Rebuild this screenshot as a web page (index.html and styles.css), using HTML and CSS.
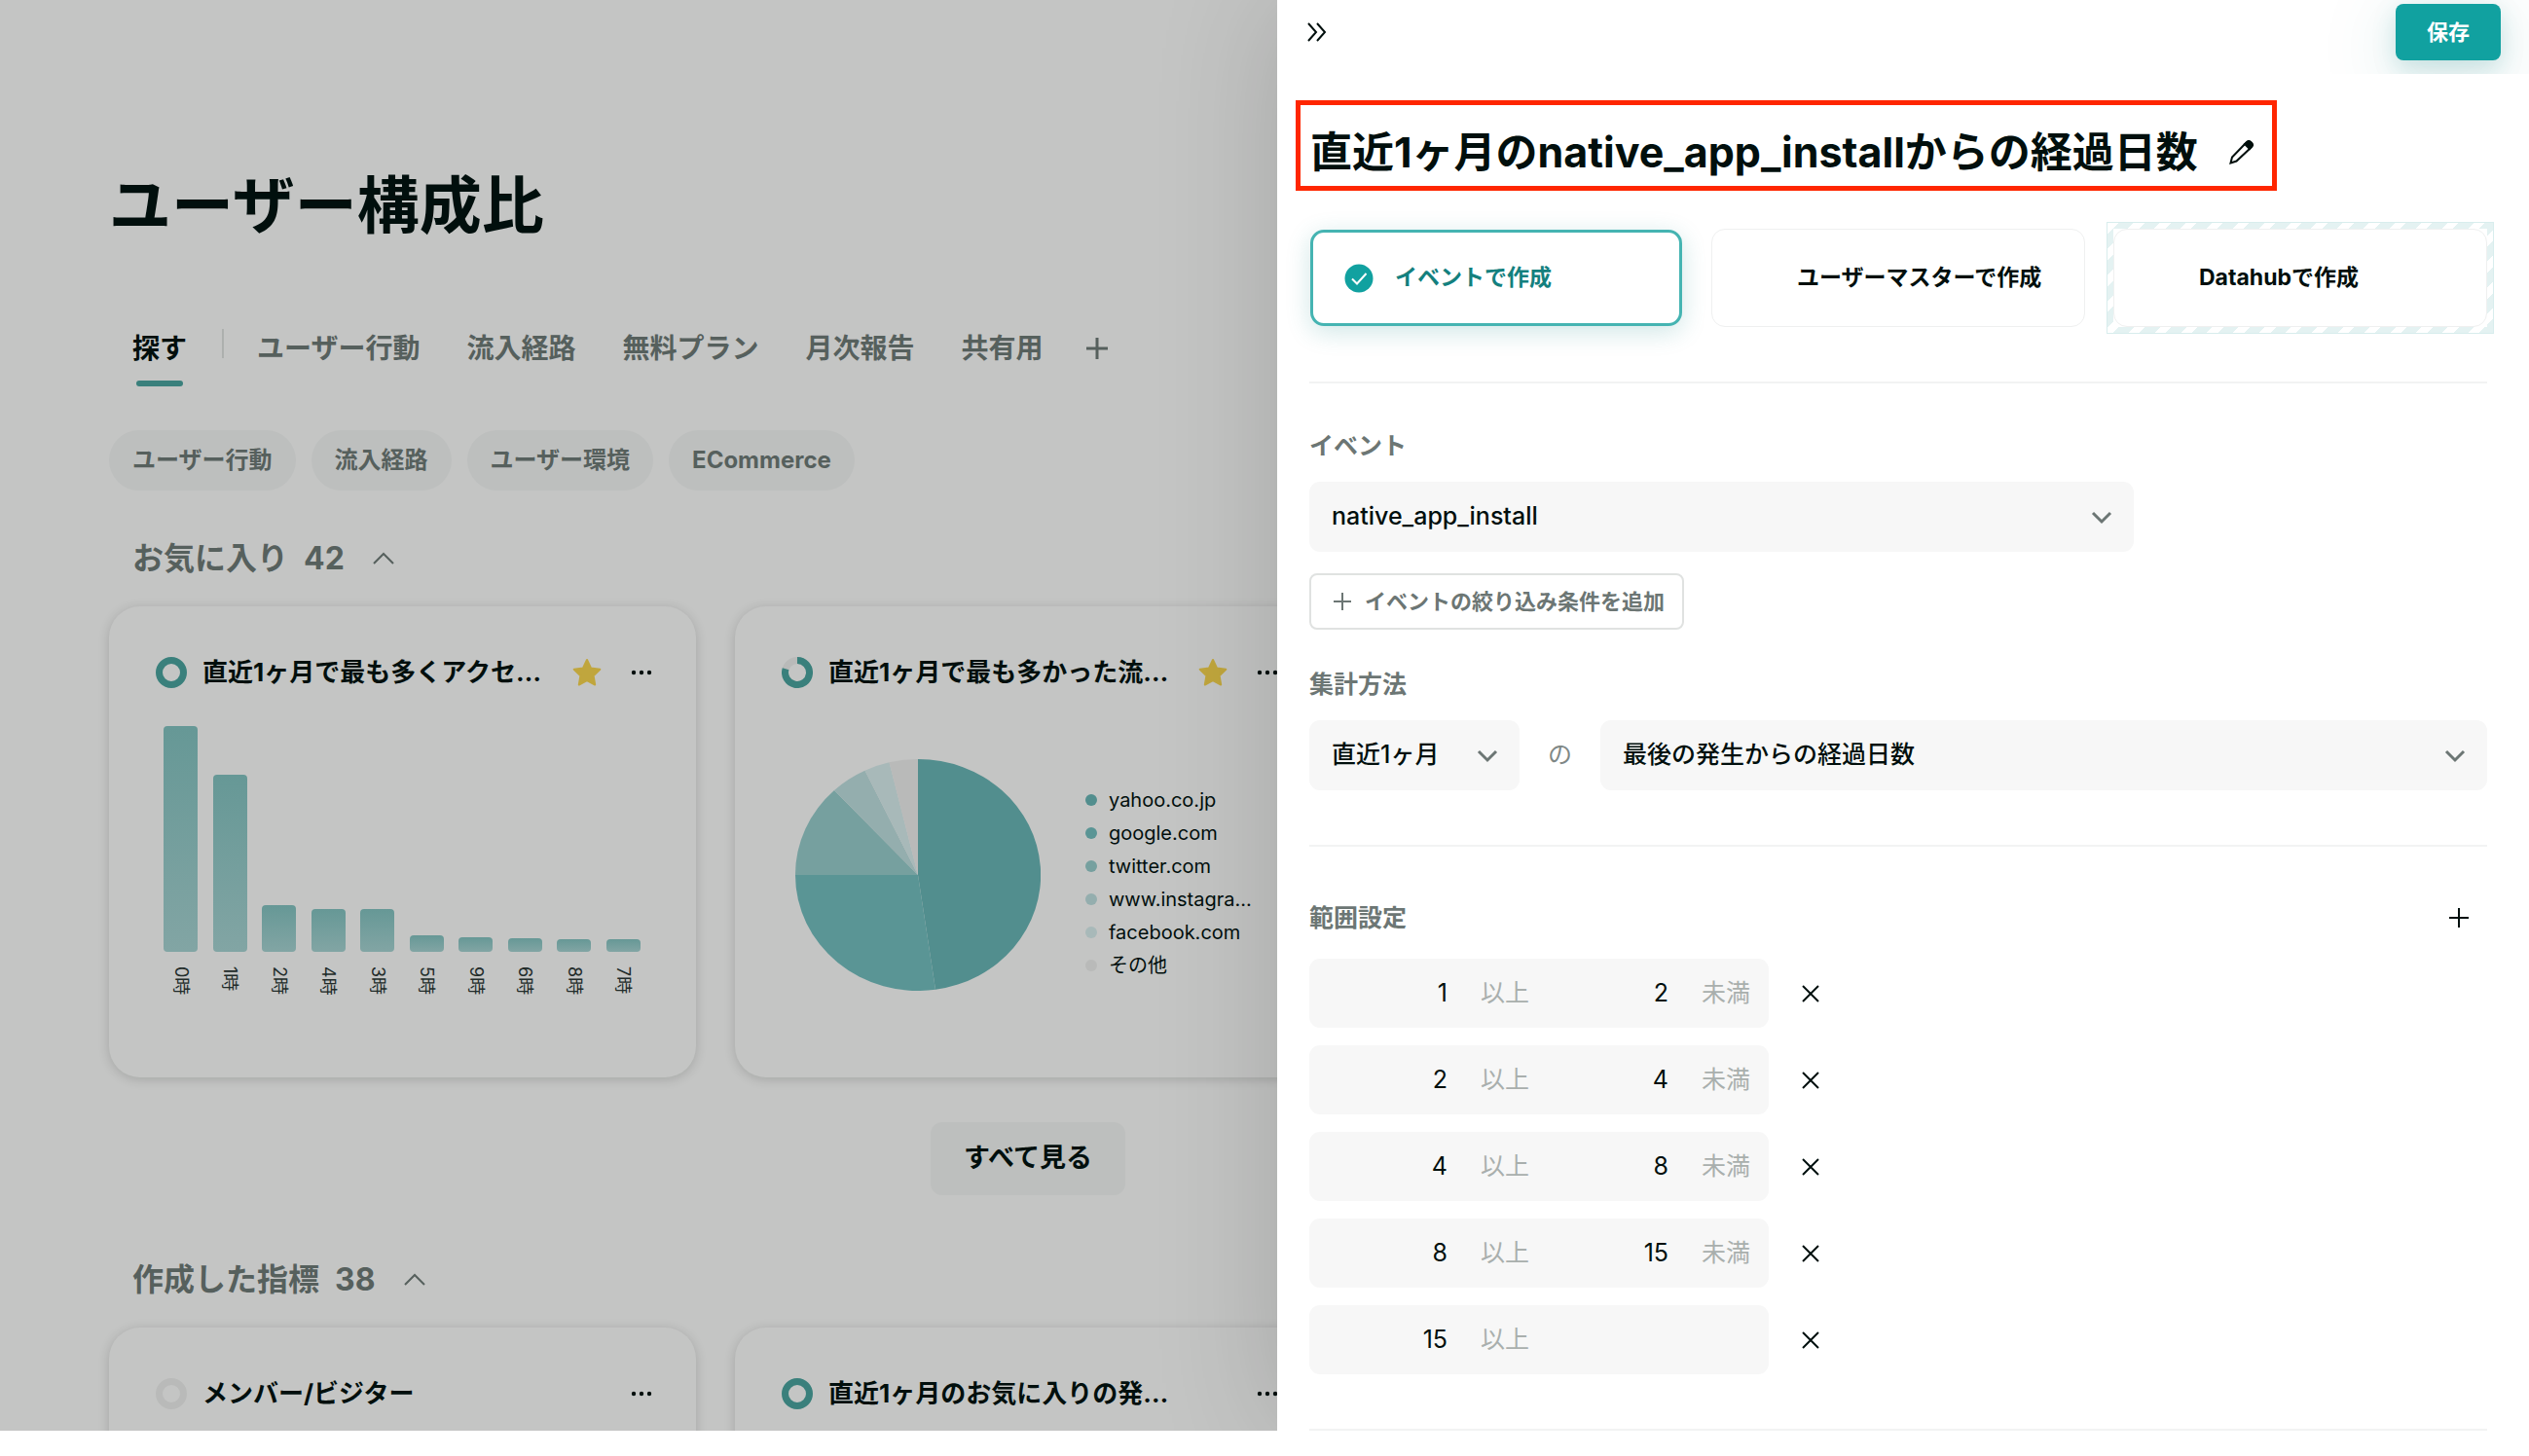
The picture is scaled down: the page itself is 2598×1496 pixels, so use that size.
FILE: index.html
```html
<!DOCTYPE html>
<html lang="ja">
<head>
<meta charset="utf-8">
<title>ユーザー構成比</title>
<link rel="stylesheet" href="styles.css">
</head>
<body>
<div class="app">
  <main class="page">
    <h1 class="page-title">ユーザー構成比</h1>
    <nav class="tabs">
      <a class="tab tab-active" href="#">探す</a>
      <span class="tab-sep"></span>
      <a class="tab" href="#">ユーザー行動</a>
      <a class="tab" href="#">流入経路</a>
      <a class="tab" href="#">無料プラン</a>
      <a class="tab" href="#">月次報告</a>
      <a class="tab" href="#">共有用</a>
      <button class="icon-btn" aria-label="タブを追加"><svg width="24" height="24" viewBox="0 0 24 24"><path d="M12 1v22M1 12h22"/></svg></button>
    </nav>
    <div class="chips">
      <button class="chip">ユーザー行動</button>
      <button class="chip">流入経路</button>
      <button class="chip">ユーザー環境</button>
      <button class="chip">ECommerce</button>
    </div>

    <h2 class="section-title">お気に入り <span>42</span>
      <svg class="caret" width="22" height="14" viewBox="0 0 22 14"><path d="M1 12L11 2l10 10"/></svg></h2>
    <div class="cards">
      <article class="card">
        <header class="card-head">
          <svg class="ring" width="32" height="32" viewBox="0 0 32 32"><circle cx="16" cy="16" r="12.5"/></svg>
          <h3>直近1ヶ月で最も多くアクセ…</h3>
          <svg class="star" width="32" height="32" viewBox="0 0 32 32"><path d="M16 3l4 8.500 9.300 1.300-6.700 6.500 1.600 9.200-8.200-4.400-8.200 4.400 1.600-9.200-6.700-6.500 9.300-1.300z"/></svg>
          <svg class="dots" width="22" height="6" viewBox="0 0 22 6"><circle cx="3" cy="3" r="2.200"/><circle cx="11" cy="3" r="2.200"/><circle cx="19" cy="3" r="2.200"/></svg>
        </header>
        <div class="bars">
          <div class="bar-col"><i style="height:232px"></i><span>0時</span></div>
          <div class="bar-col"><i style="height:182px"></i><span>1時</span></div>
          <div class="bar-col"><i style="height:48px"></i><span>2時</span></div>
          <div class="bar-col"><i style="height:44px"></i><span>4時</span></div>
          <div class="bar-col"><i style="height:44px"></i><span>3時</span></div>
          <div class="bar-col"><i style="height:17px"></i><span>5時</span></div>
          <div class="bar-col"><i style="height:15px"></i><span>9時</span></div>
          <div class="bar-col"><i style="height:14px"></i><span>6時</span></div>
          <div class="bar-col"><i style="height:13px"></i><span>8時</span></div>
          <div class="bar-col"><i style="height:13px"></i><span>7時</span></div>
        </div>
      </article>
      <article class="card">
        <header class="card-head">
          <svg class="ring" width="32" height="32" viewBox="0 0 32 32"><circle class="ring-off" cx="16" cy="16" r="12.500"/><path d="M16 3.500A12.500 12.500 0 1 1 4.100 12.200"/></svg>
          <h3>直近1ヶ月で最も多かった流…</h3>
          <svg class="star" width="32" height="32" viewBox="0 0 32 32"><path d="M16 3l4 8.500 9.300 1.300-6.700 6.500 1.600 9.200-8.200-4.400-8.200 4.400 1.600-9.200-6.700-6.500 9.300-1.300z"/></svg>
          <svg class="dots" width="22" height="6" viewBox="0 0 22 6"><circle cx="3" cy="3" r="2.200"/><circle cx="11" cy="3" r="2.200"/><circle cx="19" cy="3" r="2.200"/></svg>
        </header>
        <div class="pie-row">
          <svg class="pie" width="252" height="238" viewBox="-126 -119 252 238">
            <path fill="#528e8e" d="M0 0V-119A126 119 0 0 1 18 117.800z"/>
            <path fill="#5a9595" d="M0 0L18 117.800A126 119 0 0 1-126 0z"/>
            <path fill="#76a09f" d="M0 0H-126A126 119 0 0 1-86 -87z"/>
            <path fill="#94aeae" d="M0 0L-86 -87A126 119 0 0 1-54.500 -107.300z"/>
            <path fill="#a8b9b9" d="M0 0L-54.500 -107.300A126 119 0 0 1-29.500 -115.700z"/>
            <path fill="#b9bab9" d="M0 0L-29.500 -115.700A126 119 0 0 1 0-119z"/>
          </svg>
          <ul class="legend">
            <li><i class="c1"></i>yahoo.co.jp</li>
            <li><i class="c2"></i>google.com</li>
            <li><i class="c3"></i>twitter.com</li>
            <li><i class="c4"></i>www.instagra...</li>
            <li><i class="c5"></i>facebook.com</li>
            <li><i class="c6"></i>その他</li>
          </ul>
        </div>
      </article>
    </div>
    <button class="see-all">すべて見る</button>

    <h2 class="section-title">作成した指標 <span>38</span>
      <svg class="caret" width="22" height="14" viewBox="0 0 22 14"><path d="M1 12L11 2l10 10"/></svg></h2>
    <div class="cards">
      <article class="card">
        <header class="card-head">
          <svg class="ring" width="32" height="32" viewBox="0 0 32 32"><circle class="ring-off" cx="16" cy="16" r="12.500"/></svg>
          <h3>メンバー/ビジター</h3>
          <svg class="dots" width="22" height="6" viewBox="0 0 22 6"><circle cx="3" cy="3" r="2.200"/><circle cx="11" cy="3" r="2.200"/><circle cx="19" cy="3" r="2.200"/></svg>
        </header>
      </article>
      <article class="card">
        <header class="card-head">
          <svg class="ring" width="32" height="32" viewBox="0 0 32 32"><circle cx="16" cy="16" r="12.500"/></svg>
          <h3>直近1ヶ月のお気に入りの発…</h3>
          <svg class="dots" width="22" height="6" viewBox="0 0 22 6"><circle cx="3" cy="3" r="2.200"/><circle cx="11" cy="3" r="2.200"/><circle cx="19" cy="3" r="2.200"/></svg>
        </header>
      </article>
    </div>
  </main>

  <aside class="drawer">
    <div class="drawer-head">
      <button class="icon-btn dark" aria-label="閉じる"><svg width="22" height="22" viewBox="0 0 22 22"><path d="M2 2l8 9-8 9M11 2l8 9-8 9"/></svg></button>
      <button class="save">保存</button>
    </div>
    <div class="drawer-body">
      <div class="name-box">
        <h2>直近1ヶ月のnative_app_installからの経過日数</h2>
        <button class="icon-btn dark" aria-label="名前を編集"><svg class="pencil" width="30" height="30" viewBox="0 0 30 30"><path d="M3.500 26.500l1.500-6L20 5q2.200-2 4.300 0l.7.800q2 2 0 4.200L9.500 24.500z"/><path d="M18 7l5 5 3-4-4-4z" class="tip"/></svg></button>
      </div>
      <div class="kinds">
        <label class="kind"><input type="radio" name="kind" checked><svg class="check" width="30" height="30" viewBox="0 0 30 30"><circle cx="15" cy="15" r="14.500"/><path d="M8 15.500l5 5L22.500 10"/></svg><span>イベントで作成</span></label>
        <label class="kind"><input type="radio" name="kind"><svg class="check" width="30" height="30" viewBox="0 0 30 30"><circle cx="15" cy="15" r="14.500"/></svg><span>ユーザーマスターで作成</span></label>
        <label class="kind striped"><input type="radio" name="kind"><svg class="check" width="30" height="30" viewBox="0 0 30 30"><circle cx="15" cy="15" r="14.500"/></svg><span>Datahubで作成</span></label>
      </div>

      <section class="group">
        <label class="label" for="event">イベント</label>
        <div class="select event"><select id="event"><option>native_app_install</option></select><svg width="22" height="14" viewBox="0 0 22 14"><path d="M2 2l9 9 9-9"/></svg></div>
        <button class="add-filter"><svg width="18" height="18" viewBox="0 0 18 18"><path d="M9 0v18M0 9h18"/></svg>イベントの絞り込み条件を追加</button>
        <label class="label second" for="method">集計方法</label>
        <div class="method">
          <div class="select period"><select aria-label="期間"><option>直近1ヶ月</option></select><svg width="22" height="14" viewBox="0 0 22 14"><path d="M2 2l9 9 9-9"/></svg></div>
          <span class="of">の</span>
          <div class="select"><select id="method"><option>最後の発生からの経過日数</option></select><svg width="22" height="14" viewBox="0 0 22 14"><path d="M2 2l9 9 9-9"/></svg></div>
        </div>
      </section>

      <section class="group ranges">
        <div class="range-head"><h3 class="label">範囲設定</h3><button class="icon-btn dark" aria-label="範囲を追加"><svg width="22" height="22" viewBox="0 0 22 22"><path d="M11 1v20M1 11h20"/></svg></button></div>
        <div class="range"><div class="range-box"><label><input value="1"><span>以上</span></label><label><input value="2"><span>未満</span></label></div><button class="icon-btn dark" aria-label="削除"><svg width="18" height="18" viewBox="0 0 18 18"><path d="M1 1l16 16M17 1L1 17"/></svg></button></div>
        <div class="range"><div class="range-box"><label><input value="2"><span>以上</span></label><label><input value="4"><span>未満</span></label></div><button class="icon-btn dark" aria-label="削除"><svg width="18" height="18" viewBox="0 0 18 18"><path d="M1 1l16 16M17 1L1 17"/></svg></button></div>
        <div class="range"><div class="range-box"><label><input value="4"><span>以上</span></label><label><input value="8"><span>未満</span></label></div><button class="icon-btn dark" aria-label="削除"><svg width="18" height="18" viewBox="0 0 18 18"><path d="M1 1l16 16M17 1L1 17"/></svg></button></div>
        <div class="range"><div class="range-box"><label><input value="8"><span>以上</span></label><label><input value="15"><span>未満</span></label></div><button class="icon-btn dark" aria-label="削除"><svg width="18" height="18" viewBox="0 0 18 18"><path d="M1 1l16 16M17 1L1 17"/></svg></button></div>
        <div class="range"><div class="range-box"><label><input value="15"><span>以上</span></label></div><button class="icon-btn dark" aria-label="削除"><svg width="18" height="18" viewBox="0 0 18 18"><path d="M1 1l16 16M17 1L1 17"/></svg></button></div>
      </section>
      <hr class="end">
    </div>
  </aside>
</div>
</body>
</html>
```
FILE: styles.css
```css
* { box-sizing: border-box; }
body {
  margin: 0;
  background: #fff;
  color: #010f0d;
  font-family: Inter, "Noto Sans CJK JP", sans-serif;
  line-height: 1.5;
}
h1, h2, h3, ul { margin: 0; padding: 0; }
button, input, select { font: inherit; color: inherit; border: 0; background: none; padding: 0; }
a { color: inherit; text-decoration: none; }
svg { fill: none; stroke: currentColor; stroke-width: 2; flex: none; display: block; }

.app {
  display: grid;
  grid-template-columns: minmax(0, 1312fr) minmax(0, 1286fr);
  height: 100vh;
  padding-bottom: 26px;
  overflow: hidden;
}

/* dimmed page behind the drawer */
.page {
  background: #c4c5c4;
  padding: 163px 0 0 112px;
  overflow: hidden;
}
.page-title { font-size: 64px; line-height: 96px; font-weight: 700; }
.tabs {
  display: flex;
  align-items: center;
  gap: 48px;
  margin-top: 61px;
  padding-left: 24px;
  height: 78px;
  font-size: 28px;
  font-weight: 600;
  color: #56605d;
}
.tab { line-height: 76px; height: 78px; }
.tab-active { color: #010f0d; }
.tab-active::after { content: ""; display: block; width: 48px; height: 6px; margin: -5px auto 0; border-radius: 3px; background: #3a807c; }
.tab-sep { width: 2px; height: 30px; background: #adb0ae; margin: 0 -14px 12px -12px; }
.icon-btn { display: flex; color: #56605d; }
.icon-btn.dark { color: #010f0d; }
.tabs .icon-btn { margin: 0 0 2px -5px; }
.tabs svg { stroke-width: 3; }
.chips { display: flex; gap: 16px; margin-top: 44px; }
.chip {
  height: 62px;
  padding: 0 24px;
  border-radius: 31px;
  background: #bdbfbe;
  color: #56605d;
  font-size: 24px;
  font-weight: 700;
}
.section-title {
  display: flex;
  align-items: center;
  gap: 16px;
  padding-left: 24px;
  height: 48px;
  margin-top: 46px;
  color: #56605d;
  font-size: 32px;
  line-height: 48px;
  font-weight: 700;
}
.caret { margin-left: 13px; }
.cards { display: flex; gap: 40px; margin-top: 25px; }
.card {
  flex: 0 0 603px;
  height: 484px;
  padding: 48px;
  border-radius: 32px;
  background: #c4c5c4;
  box-shadow: 0 2px 12px rgba(0, 10, 8, .16);
}
.card-head { display: flex; align-items: center; height: 40px; }
.card-head h3 { flex: 1; margin-left: 16px; font-size: 26px; line-height: 40px; font-weight: 700; white-space: nowrap; }
.ring { color: #3a807c; stroke-width: 7; }
.ring-off { color: #b9bab9; }
.star { stroke: #c0a63d; fill: #c0a63d; stroke-linejoin: round; margin-right: 29px; }
.dots { fill: currentColor; stroke: none; margin-right: -3px; }
.bars { display: grid; grid-template-columns: repeat(10, 35px); justify-content: space-between; align-items: end; padding: 0 9px 0 8px; margin-top: 35px; }
.bar-col { display: flex; flex-direction: column; align-items: center; gap: 15px; height: 280px; justify-content: flex-end; }
.bar-col i { width: 35px; border-radius: 4px; background: linear-gradient(#669896, #82a5a4); }
.bar-col span { writing-mode: vertical-rl; text-orientation: sideways; font-size: 18px; line-height: 22px; height: 33px; color: #222c2a; }
.pie-row { display: flex; align-items: center; margin-top: 69px; padding-left: 14px; }
.pie { stroke: none; }
.legend { list-style: none; margin: 16px 0 0 46px; font-size: 20px; line-height: 34px; }
.legend li { display: flex; align-items: center; gap: 12px; }
.legend i { width: 12px; height: 12px; border-radius: 50%; }
.c1 { background: #528e8e; }
.c2 { background: #5a9595; }
.c3 { background: #76a09f; }
.c4 { background: #94aeae; }
.c5 { background: #a8b9b9; }
.c6 { background: #b9bab9; }
.see-all {
  display: block;
  margin: 46px 0 0 844px;
  width: 200px;
  height: 75px;
  border-radius: 12px;
  background: #bdbfbe;
  font-size: 27px;
  font-weight: 600;
}
.see-all + .section-title { margin-top: 63px; }

/* drawer */
.drawer { position: relative; z-index: 0; background: #fff; box-shadow: 0 0 120px rgba(0, 10, 8, .16); clip-path: inset(0 0 0 -320px); }
.drawer-head {
  display: flex;
  justify-content: space-between;
  align-items: flex-start;
  height: 76px;
  padding: 4px 29px 0 30px;
  overflow: hidden;
}
.drawer-head .icon-btn { margin-top: 18px; }
.save {
  width: 108px;
  height: 58px;
  border-radius: 8px;
  background: #11a1a0;
  color: #fff;
  font-size: 22px;
  font-weight: 700;
  box-shadow: 0 8px 24px rgba(17, 130, 128, .18), 0 16px 80px rgba(17, 130, 128, .18);
}
.drawer-body { padding: 27px 43px 0 33px; }
.name-box {
  display: flex;
  align-items: center;
  justify-content: space-between;
  width: fit-content;
  height: 93px;
  margin-left: -14px;
  padding: 12px 16px 0 10px;
  gap: 30px;
  border: 5px solid #ff2600;
}
.name-box h2 { font-size: 43px; line-height: 60px; font-weight: 700; white-space: nowrap; }
.pencil { stroke-width: 2; }
.tip { fill: currentColor; }
.kinds { display: grid; grid-template-columns: repeat(3, 1fr); gap: 29px; padding-bottom: 56px; margin-top: 39px; border-bottom: 2px solid #f2f3f3; }
.kind {
  display: flex;
  align-items: center;
  gap: 22px;
  height: 101px;
  padding: 0 35px;
  border: 1px solid #eff0f0;
  border-radius: 14px;
  background: #fff;
  font-size: 23px;
  font-weight: 700;
  white-space: nowrap;
}
.kind input { appearance: none; width: 0; height: 0; margin: 0 -22px 0 0; }
.check { stroke: none; fill: none; }
.kind:has(:checked) { margin: 1px; height: 99px; border: 3px solid #45b4b2; padding: 0 32px; color: #13807e; box-shadow: 0 6px 26px rgba(17, 130, 128, .2); }
.kind:has(:checked) .check circle { fill: #11a1a0; }
.kind:has(:checked) .check path { stroke: #fff; stroke-width: 2; }
.striped { position: relative; }
.striped::before, .striped::after { content: ""; position: absolute; inset: -8px; z-index: -1; }
.striped::before { border: 1px solid #d8eded; background: repeating-linear-gradient(135deg, #fff 0 8px, #e4f2f2 8px 19px); }
.striped::after { inset: -1px; background: #fff; }
.label { display: block; color: #6c7674; font-size: 25px; line-height: 38px; font-weight: 600; }
.group { padding: 45px 0 56px; border-bottom: 2px solid #f2f3f3; }
.select { position: relative; display: flex; align-items: center; flex: 1; height: 72px; border-radius: 11px; background: #f7f7f7; color: #6c7674; }
.select select { appearance: none; width: 100%; height: 72px; padding: 0 64px 0 23px; color: #010f0d; font-size: 25px; font-weight: 500; }
.select svg { position: absolute; right: 22px; top: 30px; stroke-width: 3; pointer-events: none; }
.event { width: 70%; margin-top: 18px; }
.add-filter { display: flex; align-items: center; gap: 14px; height: 58px; margin-top: 22px; padding: 0 18px 0 23px; border: 2px solid #e0e2e1; border-radius: 8px; color: #6c7674; font-size: 22px; font-weight: 600; }
.second { margin-top: 37px; }
.method { display: flex; align-items: center; margin-top: 18px; }
.period { flex: 0 0 216px; }
.of { width: 83px; text-align: center; color: #7f8886; font-size: 25px; }
.ranges { padding: 54px 0 0; border: 0; }
.range-head { display: flex; align-items: center; justify-content: space-between; padding-right: 18px; margin-bottom: 23px; }
.range { display: flex; align-items: center; gap: 34px; margin-bottom: 18px; }
.range-box { display: flex; width: 472px; height: 71px; border-radius: 11px; background: #f7f7f7; }
.range-box label { display: flex; align-items: center; width: 227px; padding-left: 20px; color: #a9afad; font-size: 25px; }
.range-box input { width: 122px; margin-right: 34px; text-align: right; color: #010f0d; }
.range-box span { white-space: nowrap; }
.end { border: 0; height: 2px; background: #f2f3f3; margin: 56px 0 0; }
```
